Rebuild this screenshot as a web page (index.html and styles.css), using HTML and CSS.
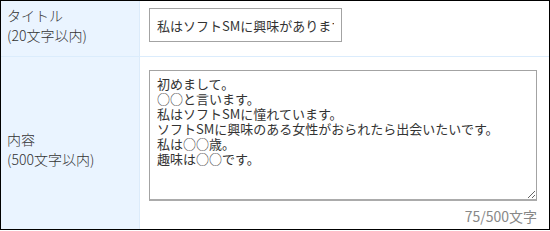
FILE: index.html
```html
<!DOCTYPE html>
<html lang="ja">

<head>
  <meta charset="UTF-8">
  <title>メッセージ入力</title>
  <link rel="stylesheet" href="styles.css">
</head>

<body>
  <div class="form-table">
    <div class="form-row row-title">
      <div class="form-label">
        <p>タイトル</p>
        <p>(20文字以内)</p>
      </div>
      <div class="form-field">
        <input class="text-input" type="text" value="私はソフトSMに興味がありますか">
      </div>
    </div>

    <div class="form-row row-body">
      <div class="form-label label-body">
        <p>内容</p>
        <p>(500文字以内)</p>
      </div>
      <div class="form-field">
        <textarea class="text-area">初めまして。
○○と言います。
私はソフトSMに憧れています。
ソフトSMに興味のある女性がおられたら出会いたいです。
私は○○歳。
趣味は○○です。</textarea>
        <div class="counter">75/500文字</div>
      </div>
    </div>
  </div>
</body>

</html>
```

FILE: styles.css
```css
* {
  margin: 0;
  padding: 0;
  box-sizing: border-box;
}

body {
  font-family: "Noto Sans CJK JP", "Noto Sans", sans-serif;
  color: #333;
  background: #fff;
}

.form-table {
  width: 550px;
  height: 230px;
  border: 1px solid #000;
  display: flex;
  flex-direction: column;
}

.form-row {
  display: grid;
  grid-template-columns: 139px 1fr;
}

.row-title {
  height: 56px;
  border-bottom: 1px solid #dbecfc;
}

.row-body {
  flex: 1;
}

.form-label {
  background: #eaf4ff;
  border-right: 1px solid #dcebfa;
  padding: 4px 0 0 6px;
  font-size: 14px;
  line-height: 20px;
  font-weight: 300;
}

.label-body {
  padding-top: 72px;
}

.form-field {
  padding: 7px 0 0 9px;
}

.row-body .form-field {
  padding-top: 13px;
}

.text-input {
  width: 193px;
  height: 34px;
  border: 1px solid #a3a3a3;
  padding: 0 7px;
  font-family: inherit;
  font-size: 13px;
  color: #333;
  outline: none;
}

.text-area {
  display: block;
  width: 388px;
  height: 131px;
  border: 1px solid #a3a3a3;
  border-bottom: 2px solid #ababab;
  padding: 5px 7px;
  font-family: inherit;
  font-size: 13px;
  line-height: 15px;
  color: #333;
  resize: vertical;
  outline: none;
}

.counter {
  width: 388px;
  text-align: right;
  font-size: 14px;
  line-height: 20px;
  color: #888;
  margin-top: 5px;
}
```
